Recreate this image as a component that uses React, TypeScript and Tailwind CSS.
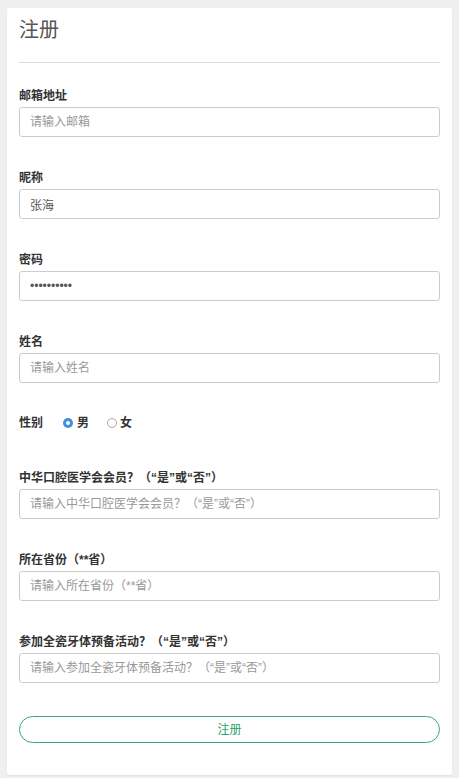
import React from "react";

const font = { fontFamily: '"Liberation Sans", "Noto Sans CJK SC", sans-serif' };

function Field({ label, placeholder, value, type }: { label: string; placeholder?: string; value?: string; type?: string }) {
  return (
    <div className="flex flex-col mb-[33px]">
      <label className="text-[12px] leading-[17px] font-bold text-[#333] mb-[2px]">{label}</label>
      <input
        type={type || "text"}
        readOnly
        value={value ?? ""}
        placeholder={placeholder}
        className="h-[30px] w-full border border-[#cccccc] rounded-[3px] px-[10px] text-[12px] text-[#555] placeholder:text-[#999] outline-none bg-white"
        style={font}
      />
    </div>
  );
}

export default function App() {
  return (
    <div className="min-h-[778px] bg-[#eeeff1] pt-[8px] px-[7px] pb-[3px]" style={font}>
      <div className="bg-white rounded-[3px] shadow-[0_1px_2px_rgba(0,0,0,0.06)] px-[12px] pt-[8px] pb-[32px]">
        <h1 className="text-[20px] leading-[28px] text-[#555] font-normal">注册</h1>
        <div className="h-px bg-[#dddddd] mt-[18px] mb-[25px]" />
        <Field label="邮箱地址" placeholder="请输入邮箱" />
        <Field label="昵称" value="张海" />
        <Field label="密码" value="1234567890" type="password" />
        <Field label="姓名" placeholder="请输入姓名" />
        <div className="flex items-center h-[14px] mb-[40px] text-[12px] font-bold text-[#333]">
          <span className="w-[44px]">性别</span>
          <span className="w-[10px] h-[10px] rounded-full bg-[#3d8fe0] flex items-center justify-center">
            <span className="w-[4px] h-[4px] rounded-full bg-white" />
          </span>
          <span className="ml-[4px]">男</span>
          <span className="ml-[18px] w-[10px] h-[10px] rounded-full border border-[#aaa] bg-white" />
          <span className="ml-[3px]">女</span>
        </div>
        <Field label="中华口腔医学会会员？（“是”或“否”）" placeholder="请输入中华口腔医学会会员？（“是”或“否”）" />
        <Field label="所在省份（**省）" placeholder="请输入所在省份（**省）" />
        <Field label="参加全瓷牙体预备活动？（“是”或“否”）" placeholder="请输入参加全瓷牙体预备活动？（“是”或“否”）" />
        <button className="w-full h-[27px] rounded-full border border-[#3aa876] text-[#2e9e6a] text-[12px] bg-white" style={font}>
          注册
        </button>
      </div>
    </div>
  );
}
